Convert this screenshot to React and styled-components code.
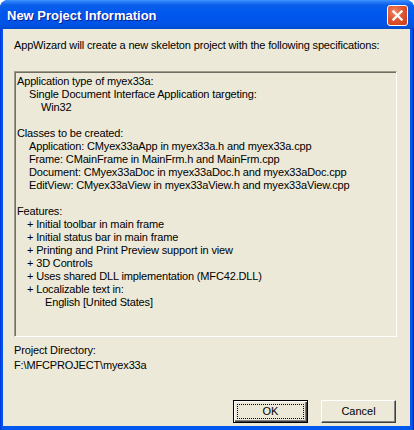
import React from "react";
import styled, { createGlobalStyle } from "styled-components";

const GlobalStyle = createGlobalStyle`
  html, body { margin: 0; padding: 0; background: #ffffff; }
  body { font-family: "Liberation Sans", Arial, sans-serif; }
`;

const Window = styled.div`
  width: 414px;
  height: 430px;
  box-sizing: border-box;
  display: flex;
  flex-direction: column;
  background: linear-gradient(to right, #0831d9 0px, #0058ee 2px, #0058ee calc(100% - 2px), #001ea0 100%);
  border-radius: 8px 8px 0 0;
  overflow: hidden;
`;

const TitleBar = styled.div`
  height: 29px;
  flex: none;
  display: flex;
  align-items: center;
  justify-content: space-between;
  padding: 0 6px 0 7px;
  background: linear-gradient(
    to bottom,
    #3d95ff 0px,
    #2a7af8 2px,
    #0a5fe8 5px,
    #0058ee 12px,
    #0054e8 22px,
    #0050dc 27px,
    #0046c4 29px
  );
`;

const Title = styled.span`
  font-family: "Liberation Sans", Arial, sans-serif;
  font-weight: bold;
  font-size: 13px;
  color: #ffffff;
  letter-spacing: 0px;
  text-shadow: 1px 1px 0 #0a1e8c;
  padding-top: 1px;
`;

const CloseButton = styled.div`
  width: 21px;
  height: 21px;
  box-sizing: border-box;
  border: 1px solid #ffffff;
  border-radius: 3px;
  background: radial-gradient(circle at 35% 30%, #ef8a66 0%, #e0552f 45%, #c63d19 100%);
  display: flex;
  align-items: center;
  justify-content: center;
  margin-top: 1px;
`;

const Body = styled.div`
  flex: 1;
  margin: 0 4px 4px 3px;
  background: #ece9d8;
  display: flex;
  flex-direction: column;
  padding: 10px 13px 3px 11px;
  font-size: 11px;
  line-height: 13px;
  letter-spacing: -0.15px;
  color: #000000;
`;

const Text = styled.div`
  white-space: pre;
  margin-top: ${(p) => p.$gap || 0}px;
`;

const InfoBox = styled.div`
  margin-top: 19px;
  height: 266px;
  box-sizing: border-box;
  border-top: 1px solid #a09c8c;
  border-left: 1px solid #a09c8c;
  border-right: 1px solid #ffffff;
  border-bottom: 1px solid #ffffff;
  box-shadow: inset 1px 1px 0 #716f64;
  padding: 3px 2px 2px 2px;
`;

const Line = styled.div`
  height: 13px;
  white-space: pre;
  padding-left: ${(p) => p.$indent || 0}px;
`;

const ButtonRow = styled.div`
  margin-top: auto;
  display: flex;
  justify-content: flex-end;
  gap: 13px;
  padding-right: 1px;
`;

const Button = styled.div`
  width: 75px;
  height: 23px;
  box-sizing: border-box;
  background: #ece9d8;
  display: flex;
  align-items: center;
  justify-content: center;
  font-size: 11px;
  letter-spacing: 0;
  position: relative;
  border-top: 1px solid ${(p) => (p.$default ? "#000000" : "#ffffff")};
  border-left: 1px solid ${(p) => (p.$default ? "#000000" : "#ffffff")};
  border-right: 1px solid ${(p) => (p.$default ? "#000000" : "#404040")};
  border-bottom: 1px solid ${(p) => (p.$default ? "#000000" : "#404040")};
  box-shadow: ${(p) =>
    p.$default
      ? "inset 1px 1px 0 #ffffff, inset -1px -1px 0 #404040, inset -2px -2px 0 #808080"
      : "inset -1px -1px 0 #808080"};
`;

const FocusRing = styled.span`
  position: absolute;
  inset: 3px;
  border: 1px dotted #000000;
`;

const lines = [
  ["Application type of myex33a:", 0],
  ["Single Document Interface Application targeting:", 12],
  ["Win32", 24],
  ["", 0],
  ["Classes to be created:", 0],
  ["Application: CMyex33aApp in myex33a.h and myex33a.cpp", 12],
  ["Frame: CMainFrame in MainFrm.h and MainFrm.cpp", 12],
  ["Document: CMyex33aDoc in myex33aDoc.h and myex33aDoc.cpp", 12],
  ["EditView: CMyex33aView in myex33aView.h and myex33aView.cpp", 12],
  ["", 0],
  ["Features:", 0],
  ["+ Initial toolbar in main frame", 10],
  ["+ Initial status bar in main frame", 10],
  ["+ Printing and Print Preview support in view", 10],
  ["+ 3D Controls", 10],
  ["+ Uses shared DLL implementation (MFC42.DLL)", 10],
  ["+ Localizable text in:", 10],
  ["English [United States]", 28],
];

export default function App() {
  return (
    <>
      <GlobalStyle />
      <Window>
        <TitleBar>
          <Title>New Project Information</Title>
          <CloseButton>
            <svg width="11" height="11" viewBox="0 0 11 11">
              <path d="M1.5 1.5 L9.5 9.5 M9.5 1.5 L1.5 9.5" stroke="#ffffff" strokeWidth="2.3" strokeLinecap="square" />
            </svg>
          </CloseButton>
        </TitleBar>
        <Body>
          <Text>AppWizard will create a new skeleton project with the following specifications:</Text>
          <InfoBox>
            {lines.map(([t, i], k) => (
              <Line key={k} $indent={i}>{t}</Line>
            ))}
          </InfoBox>
          <Text $gap={7}>Project Directory:</Text>
          <Text $gap={2}>F:\MFCPROJECT\myex33a</Text>
          <ButtonRow>
            <Button $default>
              <FocusRing />
              OK
            </Button>
            <Button>Cancel</Button>
          </ButtonRow>
        </Body>
      </Window>
    </>
  );
}
